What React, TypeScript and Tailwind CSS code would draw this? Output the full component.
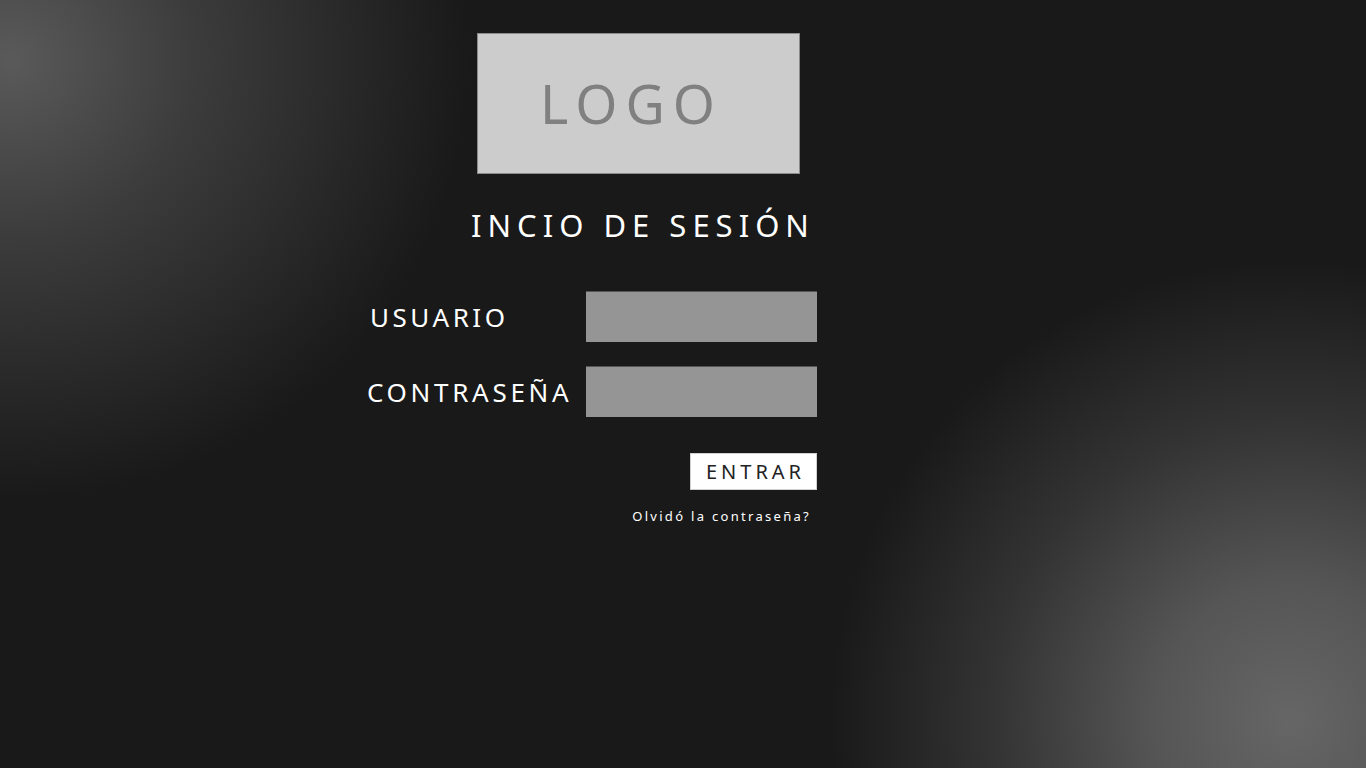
import React from "react";

const font = { fontFamily: '"Noto Sans", "Open Sans", sans-serif' };

export default function App() {
    return (
        <div
            className="min-h-screen w-full bg-[#191919] bg-[image:radial-gradient(ellipse_460px_440px_at_10px_60px,#5a5a5a_0%,#3c3c3c_40%,#19191900_100%),radial-gradient(ellipse_460px_460px_at_1290px_720px,#666666_0%,#555555_30%,#333333_65%,#19191900_100%)] overflow-hidden"
            style={font}
        >
            <div className="pt-[33px] pl-[367px]">
                <div className="w-[450px] flex flex-col">
                    <div className="ml-[110px] w-[323px] h-[141px] bg-[#cccccc] border border-[#8a8a8a] flex items-center justify-center">
                        <span className="text-[54px] leading-none text-[#808080] tracking-[8px] pr-[14px] -mt-[2px]">LOGO</span>
                    </div>

                    <h1 className="mt-[36px] ml-[104px] text-[31px] leading-none text-white tracking-[6px] whitespace-nowrap">
                        INCIO DE SESIÓN
                    </h1>

                    <form className="mt-[50px] flex flex-col" onSubmit={(e) => e.preventDefault()}>
                        <div className="flex items-center">
                            <label className="w-[219px] pl-[3px] text-[26px] leading-none text-white tracking-[3.5px]">USUARIO</label>
                            <input className="w-[231px] h-[51px] bg-[#959595] border-t border-t-[#555555] outline-none" />
                        </div>
                        <div className="flex items-center mt-[24px]">
                            <label className="w-[219px] text-[26px] leading-none text-white tracking-[3.7px] whitespace-nowrap">CONTRASEÑA</label>
                            <input type="password" className="w-[231px] h-[51px] bg-[#959595] border-t border-t-[#555555] outline-none" />
                        </div>

                        <div className="flex justify-end mt-[36px]">
                            <button className="w-[127px] h-[37px] bg-white border border-[#d0d0d0] text-[#222222] text-[20px] leading-none tracking-[4px] pl-[4px]">
                                ENTRAR
                            </button>
                        </div>

                        <div className="flex justify-end mt-[20px] pr-[6px]">
                            <a className="text-[13px] leading-none text-white tracking-[2.3px] cursor-pointer">Olvidó la contraseña?</a>
                        </div>
                    </form>
                </div>
            </div>
        </div>
    );
}
